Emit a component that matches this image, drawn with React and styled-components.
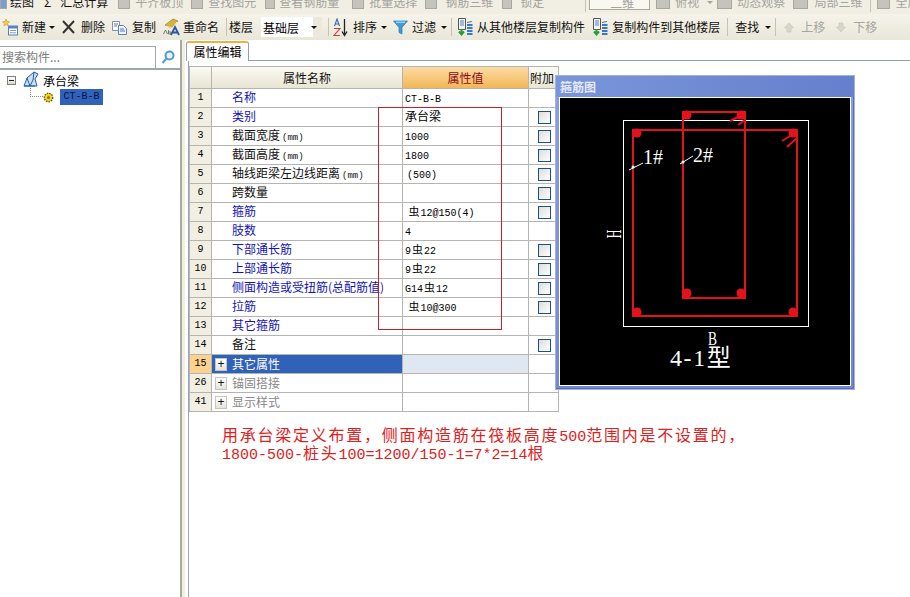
import React from 'react';
import styled, { createGlobalStyle } from 'styled-components';

const GlobalStyle = createGlobalStyle`
  html, body { margin: 0; padding: 0; background: #fff; }
  body { font-family: "Noto Sans CJK SC", "Liberation Sans", sans-serif; font-size: 12px; color: #000; }
`;

const Page = styled.div`
  position: relative;
  width: 910px;
  height: 597px;
  overflow: hidden;
  background: #fff;
`;

const gapLeft = (p) => `margin-left: ${p.$ml || 0}px;`;

const MenuRow = styled.div`
  display: flex;
  align-items: flex-start;
  height: 14px;
  overflow: hidden;
  white-space: nowrap;
  background: #f1efe3;
`;

const MenuText = styled.span`
  ${gapLeft}
  flex: none;
  margin-top: -6px;
  line-height: 16px;
  color: ${(p) => (p.$on ? '#111' : '#a3a3a0')};
`;

const MenuIcon = styled.span`
  ${gapLeft}
  flex: none;
  width: ${(p) => p.$w || 12}px;
  height: 9px;
  background: ${(p) => p.$color || '#c4c4bc'};
  border: 1px solid #a8a8a0;
  box-sizing: border-box;
  border-top: 0;
`;

const MenuSep = styled.span`
  ${gapLeft}
  flex: none;
  width: 1px;
  height: 12px;
  background: #c5c3b3;
`;

const MenuCaret = styled.span`
  ${gapLeft}
  flex: none;
  margin-top: 1px;
  border: 3px solid transparent;
  border-top-color: #a3a3a0;
  border-bottom: 0;
`;

const ViewSelect = styled.span`
  ${gapLeft}
  flex: none;
  width: 61px;
  height: 10px;
  box-sizing: border-box;
  border: 1px solid #aaa99f;
  border-top: 0;
  background: #f8f7f0;
  color: #a3a3a0;
  line-height: 6px;
  padding-left: 20px;
`;

const ToolBar = styled.div`
  display: flex;
  align-items: center;
  height: 26px;
  white-space: nowrap;
  background: linear-gradient(#f6f4ea, #e9e7d8);
`;

const ToolText = styled.span`
  ${gapLeft}
  flex: none;
  line-height: 16px;
  color: ${(p) => (p.$off ? '#a5a5a0' : '#111')};
`;

const ToolSvg = styled.svg`
  ${gapLeft}
  flex: none;
  display: block;
`;

const Caret = styled.span`
  ${gapLeft}
  flex: none;
  width: 0;
  height: 0;
  border: 3px solid transparent;
  border-top-color: #111;
  border-bottom: 0;
`;

const Sep = styled.span`
  ${gapLeft}
  flex: none;
  width: 1px;
  height: 18px;
  background: #c5c3b3;
`;

const FloorSelect = styled.span`
  ${gapLeft}
  flex: none;
  display: flex;
  align-items: center;
  width: 61px;
  height: 20px;
  box-sizing: border-box;
  background: linear-gradient(90deg, #fff 85%, #ece9dc 85%);
  padding-left: 2px;
  justify-content: space-between;
  padding-right: 5px;
`;

const Body = styled.div`
  display: flex;
  height: 557px;
`;

const Side = styled.aside`
  flex: none;
  width: 180px;
  padding-top: 6px;
  box-sizing: border-box;
`;

const Search = styled.div`
  display: flex;
  height: 24px;
`;

const SearchInput = styled.div`
  width: 156px;
  box-sizing: border-box;
  border: 1px solid #9ea6ad;
  border-left: 0;
  border-bottom-width: 2px;
  padding-left: 2px;
  line-height: 20px;
  color: #7c7c7c;
`;

const SearchButton = styled.div`
  flex: 1;
  display: flex;
  align-items: center;
  justify-content: center;
  border-bottom: 2px solid #9ea6ad;
`;

const Tree = styled.div`
  position: relative;
  padding: 2px 0 0 7px;
`;

const TreeRow = styled.div`
  display: flex;
  align-items: center;
  height: ${(p) => p.$h}px;
`;

const Toggle = styled.span`
  flex: none;
  width: 9px;
  height: 9px;
  box-sizing: border-box;
  border: 1px solid #7f7f7f;
  background: linear-gradient(#fff, #d8d8d0);
  display: flex;
  align-items: center;
  justify-content: center;
  &::before {
    content: '';
    width: 5px;
    height: 1px;
    background: #222;
  }
`;

const TreeLabel = styled.span`
  ${gapLeft}
  line-height: 16px;
`;

const Dots = styled.span`
  flex: none;
  width: 13px;
  height: 9px;
  margin-left: 23px;
  margin-top: -9px;
  box-sizing: border-box;
  border-left: 1px dotted #888;
  border-bottom: 1px dotted #888;
`;

const Selected = styled.span`
  margin-left: 6px;
  width: 43px;
  height: 16px;
  background: #2f62b8;
  color: #07124a;
  font-family: "Liberation Mono", monospace;
  font-size: 10px;
  line-height: 16px;
  text-align: center;
`;

const Splitter = styled.div`
  flex: none;
  width: 5px;
  box-sizing: border-box;
  border-left: 2px solid #a9a9a4;
  background: #f0efe2;
`;

const Editor = styled.main`
  flex: 1;
  min-width: 0;
`;

const TabStrip = styled.div`
  height: 20px;
  padding: 1px 0 0 1px;
  box-sizing: border-box;
`;

const Tab = styled.div`
  position: relative;
  z-index: 1;
  width: 63px;
  height: 20px;
  box-sizing: border-box;
  border: 1px solid #8f9db5;
  border-top: 2px solid #f0b040;
  border-bottom: 0;
  border-radius: 3px 3px 0 0;
  background: #fff;
  line-height: 17px;
  text-align: center;
`;

const Panel = styled.div`
  margin-left: 3px;
  height: 537px;
  box-sizing: border-box;
  border-top: 1px solid #8f9db5;
  border-left: 1px solid #9aa3c8;
  padding: 5px 0 0;
`;

const Grid = styled.table`
  table-layout: fixed;
  width: 370px;
  border-spacing: 0;
  border-top: 1px solid #b4b4b0;
  border-left: 1px solid #b4b4b0;
  & td, & th {
    padding: 0;
    border-right: 1px solid #b4b4b0;
    border-bottom: 1px solid #b4b4b0;
    box-sizing: border-box;
    font-weight: normal;
    overflow: hidden;
    white-space: nowrap;
  }
`;

const HeadCell = styled.th`
  height: 22px;
  text-align: ${(p) => (p.$left ? 'left' : 'center')};
  padding-left: ${(p) => (p.$left ? 1 : 0)}px !important;
  line-height: 14px;
  color: ${(p) => (p.$hot ? '#8a0a1c' : '#111')};
  background: ${(p) => (p.$hot
    ? 'linear-gradient(#fbdca6, #f3b655)'
    : 'linear-gradient(#fbfaf3, #e8e5d3)')};
`;

const IndexCell = styled.td`
  height: 19px;
  text-align: center;
  font-family: "Liberation Mono", monospace;
  font-size: 10px;
  line-height: 14px;
  background: ${(p) => (p.$active ? '#fbd28e' : '#f0efe2')};
`;

const NameCell = styled.td`
  padding-left: ${(p) => (p.$group ? 3 : 20)}px !important;
  vertical-align: top;
  line-height: 16px;
  color: ${(p) => p.$color};
  background: ${(p) => (p.$active ? '#2f62b8' : '#fff')};
`;

const GroupName = styled.span`
  display: flex;
  align-items: center;
  height: 18px;
  gap: 5px;
`;

const PlusBox = styled.span`
  flex: none;
  width: 12px;
  height: 13px;
  box-sizing: border-box;
  border: 1px solid #c4c4c0;
  background: linear-gradient(#fff, #e4e4dc);
  color: #111;
  font-family: "Liberation Sans", sans-serif;
  font-size: 12px;
  line-height: 11px;
  text-align: center;
`;

const Unit = styled.span`
  margin-left: 2px;
  font-family: "Liberation Mono", monospace;
  font-size: 9px;
  line-height: 10px;
`;

const ValueCell = styled.td`
  padding-left: 2px !important;
  vertical-align: top;
  line-height: 16px;
  background: ${(p) => (p.$active ? '#dfe7f3' : '#fff')};
`;

const Latin = styled.span`
  font-family: "Liberation Mono", monospace;
  font-size: 10px;
  line-height: 10px;
  margin-left: ${(p) => p.$ml || 0}px;
`;

const Rebar = styled.span`
  font-size: 11px;
  line-height: 10px;
  margin: 0 1px;
`;

const CheckCell = styled.td`
  text-align: center;
  padding-left: 1px !important;
  background: #fff;
`;

const CheckBox = styled.span`
  display: block;
  margin: 0 auto;
  width: 13px;
  height: 13px;
  box-sizing: border-box;
  border: 1px solid #1c5180;
  background: linear-gradient(135deg, #dcdcd7, #fff);
`;

const Note = styled.div`
  margin: 13px 0 0 33px;
  color: #e0201c;
  font-size: 16px;
  letter-spacing: 1.75px;
  white-space: nowrap;
`;

const NoteLine = styled.div`
  height: 18px;
  line-height: 18px;
`;

const NoteLatin = styled.span`
  font-family: "Liberation Mono", monospace;
  font-size: 15px;
  letter-spacing: 0;
`;

// hand drawn red box on top of the value column
const Markup = styled.div`
  position: absolute;
  left: 378px;
  top: 107px;
  width: 124px;
  height: 223px;
  box-sizing: border-box;
  border: 1px solid #c4202c;
  pointer-events: none;
`;

const Dialog = styled.section`
  position: absolute;
  left: 555px;
  top: 75px;
  width: 300px;
  height: 315px;
  box-sizing: border-box;
  padding: 0 3px 4px;
  background: linear-gradient(#8aa0de, #7288d2);
  border: 1px solid #a3b2dc;
  box-shadow: inset 0 -1px 0 #5a70b8, inset -1px 0 0 #5a70b8;
`;

const DialogTitle = styled.h3`
  height: 21px;
  font-size: 12px;
  font-weight: bold;
  line-height: 22px;
  color: #e4e8f4;
  background: linear-gradient(90deg, #7a96da, #6580cc);
  margin: 0 -3px;
  padding-left: 4px;
`;

const DialogBody = styled.div`
  border: 1px solid #fff;
  background: #000;
  height: 287px;
`;

const NewIcon = (p) => (
  <ToolSvg {...p} width="16" height="18" viewBox="0 0 16 18">
    <path d="M4 1l1 2.4 2.4.4-1.8 1.6.5 2.4L4 6.6 1.900 7.800l.5-2.400L.6 3.800 3 3.400z" fill="#f6cf3a" stroke="#b98a16" strokeWidth=".5" />
    <rect x="6.500" y="8" width="9" height="9" fill="#fff" stroke="#5a80b8" />
    <rect x="6.500" y="8" width="9" height="2.500" fill="#5a80c8" />
    <path d="M8 12.500h6M8 14.800h6" stroke="#7c9cc8" />
  </ToolSvg>
);

const DeleteIcon = (p) => (
  <ToolSvg {...p} width="13" height="14" viewBox="0 0 13 14">
    <path d="M1 1l11 12M12 1L1 13" stroke="#333" strokeWidth="2" />
  </ToolSvg>
);

const CopyIcon = (p) => (
  <ToolSvg {...p} width="15" height="15" viewBox="0 0 15 15">
    <path d="M.5 1.500h7v9h-7z" fill="#fff" stroke="#7e90b0" />
    <path d="M6.500 5.500h5l3 3v6h-8z" fill="#eef3fb" stroke="#5f80b4" />
    <path d="M2 4h4M2 6h3M8 9h4M8 11h5" stroke="#4f78c0" />
  </ToolSvg>
);

const RenameIcon = (p) => (
  <ToolSvg {...p} width="17" height="18" viewBox="0 0 17 18">
    <path d="M2 7l8-6 5 2-7 7z" fill="#d8b040" stroke="#8a7020" strokeWidth=".6" />
    <path d="M3 8l6 2 5-6" fill="none" stroke="#f5e6a0" />
    <path d="M.5 16l2-4 2 4" fill="none" stroke="#7a7a60" />
    <path d="M5.500 12v4h2.500v-2h-2.500" fill="none" stroke="#7a7a60" />
    <path d="M8 17l4-8 4 8M9.800 14.500h4.400" fill="none" stroke="#2c55a8" strokeWidth="1.800" />
  </ToolSvg>
);

const SortIcon = (p) => (
  <ToolSvg {...p} width="15" height="19" viewBox="0 0 15 19">
    <path d="M1.500 8l2.500-7 2.500 7M2.500 6h3" fill="none" stroke="#3a6ab8" strokeWidth="1.100" />
    <path d="M1 10.500h6l-6 7h6" fill="none" stroke="#b8443a" strokeWidth="1.100" />
    <path d="M11.500 1v15M9 13.500l2.500 4 2.500-4" fill="none" stroke="#222" strokeWidth="1.300" />
  </ToolSvg>
);

const FilterIcon = (p) => (
  <ToolSvg {...p} width="15" height="15" viewBox="0 0 15 15">
    <path d="M.5 1h14L9 7.500V14l-3-1.500v-5z" fill="#3f9ad8" stroke="#2a78b8" strokeWidth=".7" />
    <path d="M3 2.200h9" stroke="#c8e8f8" />
  </ToolSvg>
);

const FloorCopyIcon = (p) => (
  <ToolSvg {...p} width="16" height="19" viewBox="0 0 16 19">
    <path d="M1.500.5h7v11h-7z" fill="#f4f4ee" stroke="#555" />
    <path d="M3 3h4M3 5h4M3 7h4" stroke="#5080c8" />
    <path d="M4.500 11v4M2 13.500l2.500 3 2.500-3" fill="none" stroke="#2a9a3a" strokeWidth="2" />
    <path d="M10 7h5.500M10 10h5.500M10 13h5.500M10 16h5.500" stroke="#3a78c0" strokeWidth="1.800" />
    <path d="M10 4.500l5-1" stroke="#3a78c0" />
  </ToolSvg>
);

const MoveIcon = ({ $down, ...p }) => (
  <ToolSvg {...p} width="10" height="11" viewBox="0 0 10 11">
    <path
      d={$down ? 'M3 1h4v4h2.500L5 10 .500 5H3z' : 'M3 10h4V6h2.500L5 1 .500 6H3z'}
      fill="#d6d6cc"
      stroke="#c2c2b8"
      strokeWidth=".6"
    />
  </ToolSvg>
);

const SearchIcon = () => (
  <svg width="14" height="15" viewBox="0 0 14 15">
    <circle cx="8.500" cy="5.500" r="4" fill="#e8f3fb" stroke="#4c9ad6" strokeWidth="2" />
    <path d="M5.500 8.500L1.500 13" stroke="#5aa4dc" strokeWidth="2.400" />
  </svg>
);

const BeamIcon = () => (
  <svg width="16" height="16" viewBox="0 0 16 16">
    <path d="M1 15l3-8 7-6 4 2-3 5 2 7z" fill="#cfe0f4" stroke="#1f5fa8" />
    <path d="M1 15h11M4 7l3 8M7 15l3-6M11 1l-1 8" fill="none" stroke="#1f5fa8" />
  </svg>
);

const GearIcon = () => (
  <svg width="11" height="11" viewBox="0 0 11 11">
    <circle cx="5.500" cy="5.500" r="4.200" fill="#f2d820" stroke="#6a5a10" strokeDasharray="1.500 1" strokeWidth="1.400" />
    <circle cx="5.500" cy="5.500" r="1.500" fill="#8a7410" />
  </svg>
);

const rebarRed = '#e5121c';

const RebarDiagram = () => (
  <svg width="290" height="287" viewBox="0 0 290 287" style={{ display: 'block' }}>
    <rect x="63.500" y="22.500" width="185" height="206" fill="none" stroke="#fff" />
    <rect x="73" y="32" width="164" height="186" fill="none" stroke={rebarRed} strokeWidth="2" />
    <rect x="123" y="14" width="62" height="186" fill="none" stroke={rebarRed} strokeWidth="2" />
    {[[77, 35], [233, 35], [77, 214], [233, 214], [127, 17], [181, 17], [127, 195], [181, 195]].map(([cx, cy]) => (
      <circle key={`${cx}-${cy}`} cx={cx} cy={cy} r="4.500" fill={rebarRed} />
    ))}
    <path d="M222 43l13-8M227 49l10-9M170 23l12-6M178 27l7-5" stroke={rebarRed} strokeWidth="2" fill="none" />
    <path d="M69 72l14-7M120 66l13-8" stroke="#fff" fill="none" />
    <circle cx="73" cy="69" r="1.500" fill="#fff" />
    <circle cx="123" cy="64" r="1.500" fill="#fff" />
    <text x="83" y="66" fill="#fff" fontFamily="Liberation Serif, serif" fontSize="20">1#</text>
    <text x="133" y="64" fill="#fff" fontFamily="Liberation Serif, serif" fontSize="20">2#</text>
    <text transform="translate(61 136) rotate(-90) scale(.75 1.300)" textAnchor="middle" fill="#fff" fontFamily="Liberation Serif, serif" fontSize="16">H</text>
    <text transform="translate(148 247) scale(.75 1.100)" fill="#fff" fontFamily="Liberation Serif, serif" fontSize="18">B</text>
    <text x="110" y="268" fill="#fff" fontFamily="Liberation Serif, Noto Sans CJK SC, serif" fontSize="24">
      <tspan letterSpacing="1.600">4-1</tspan>
      <tspan fontSize="24">型</tspan>
    </text>
  </svg>
);

const rows = [
  { n: 1, name: '名称', blue: true, value: <Latin>CT-B-B</Latin> },
  { n: 2, name: '类别', blue: true, value: '承台梁', check: true },
  { n: 3, name: '截面宽度', unit: true, value: <Latin>1000</Latin>, check: true },
  { n: 4, name: '截面高度', unit: true, value: <Latin>1800</Latin>, check: true },
  { n: 5, name: '轴线距梁左边线距离', unit: true, value: <Latin $ml={2}>(500)</Latin>, check: true },
  { n: 6, name: '跨数量', check: true },
  { n: 7, name: '箍筋', blue: true, value: <><Rebar>&nbsp;虫</Rebar><Latin>12@150(4)</Latin></>, check: true },
  { n: 8, name: '肢数', blue: true, value: <Latin>4</Latin> },
  { n: 9, name: '下部通长筋', blue: true, value: <><Latin>9</Latin><Rebar>虫</Rebar><Latin>22</Latin></>, check: true },
  { n: 10, name: '上部通长筋', blue: true, value: <><Latin>9</Latin><Rebar>虫</Rebar><Latin>22</Latin></>, check: true },
  { n: 11, name: '侧面构造或受扭筋(总配筋值)', blue: true, value: <><Latin>G14</Latin><Rebar>虫</Rebar><Latin>12</Latin></>, check: true },
  { n: 12, name: '拉筋', blue: true, value: <><Rebar>&nbsp;虫</Rebar><Latin>10@300</Latin></>, check: true },
  { n: 13, name: '其它箍筋', blue: true },
  { n: 14, name: '备注', check: true },
  { n: 15, name: '其它属性', group: true, active: true },
  { n: 26, name: '锚固搭接', group: true },
  { n: 41, name: '显示样式', group: true },
];

const nameColor = (r) => {
  if (r.active) return '#fff';
  if (r.group) return '#888';
  return r.blue ? '#1414b4' : '#111';
};

function App() {
  return (
    <Page>
      <GlobalStyle />
      <MenuRow>
        <MenuIcon $w={7} $color="#7a9ccf" />
        <MenuText $ml={3} $on>绘图</MenuText>
        <MenuText $ml={10} $on>Σ</MenuText>
        <MenuText $ml={9} $on>汇总计算</MenuText>
        <MenuIcon $ml={10} />
        <MenuText $ml={5}>平齐板顶</MenuText>
        <MenuIcon $ml={8} />
        <MenuText $ml={5}>查找图元</MenuText>
        <MenuIcon $ml={9} $w={10} />
        <MenuText $ml={4}>查看钢筋量</MenuText>
        <MenuIcon $ml={13} />
        <MenuText $ml={5}>批量选择</MenuText>
        <MenuIcon $ml={8} />
        <MenuText $ml={8}>钢筋三维</MenuText>
        <MenuIcon $ml={9} $w={10} />
        <MenuText $ml={8}>锁定</MenuText>
        <MenuSep $ml={41} />
        <ViewSelect $ml={3}>二维</ViewSelect>
        <MenuIcon $ml={6} $w={14} />
        <MenuText $ml={5}>俯视</MenuText>
        <MenuCaret $ml={8} />
        <MenuIcon $ml={4} $w={15} />
        <MenuText $ml={5}>动态观察</MenuText>
        <MenuIcon $ml={8} $w={15} />
        <MenuText $ml={6}>局部三维</MenuText>
        <MenuSep $ml={8} />
        <MenuIcon $ml={6} $w={13} />
        <MenuText $ml={5}>全屏</MenuText>
      </MenuRow>
      <ToolBar>
        <NewIcon $ml={2} />
        <ToolText $ml={4}>新建</ToolText>
        <Caret $ml={3} />
        <DeleteIcon $ml={7} />
        <ToolText $ml={6}>删除</ToolText>
        <CopyIcon $ml={7} />
        <ToolText $ml={5}>复制</ToolText>
        <RenameIcon $ml={7} />
        <ToolText $ml={3}>重命名</ToolText>
        <Sep $ml={7} />
        <ToolText $ml={2}>楼层</ToolText>
        <FloorSelect $ml={8}>基础层<Caret /></FloorSelect>
        <Sep $ml={6} />
        <SortIcon $ml={4} />
        <ToolText $ml={5}>排序</ToolText>
        <Caret $ml={4} />
        <FilterIcon $ml={6} />
        <ToolText $ml={4}>过滤</ToolText>
        <Caret $ml={5} />
        <Sep $ml={4} />
        <FloorCopyIcon $ml={5} />
        <ToolText $ml={4}>从其他楼层复制构件</ToolText>
        <FloorCopyIcon $ml={7} />
        <ToolText $ml={4}>复制构件到其他楼层</ToolText>
        <Sep $ml={7} />
        <ToolText $ml={7}>查找</ToolText>
        <Caret $ml={6} />
        <Sep $ml={4} />
        <MoveIcon $ml={8} />
        <ToolText $ml={7} $off>上移</ToolText>
        <MoveIcon $ml={11} $down />
        <ToolText $ml={7} $off>下移</ToolText>
      </ToolBar>
      <Body>
        <Side>
          <Search>
            <SearchInput>搜索构件...</SearchInput>
            <SearchButton><SearchIcon /></SearchButton>
          </Search>
          <Tree>
            <TreeRow $h={17}>
              <Toggle />
              <TreeLabel $ml={7}><BeamIcon /></TreeLabel>
              <TreeLabel $ml={4}>承台梁</TreeLabel>
            </TreeRow>
            <TreeRow $h={16}>
              <Dots />
              <GearIcon />
              <Selected>CT-B-B</Selected>
            </TreeRow>
          </Tree>
        </Side>
        <Splitter />
        <Editor>
          <TabStrip><Tab>属性编辑</Tab></TabStrip>
          <Panel>
            <Grid>
              <colgroup>
                <col width="22" />
                <col width="191" />
                <col width="126" />
                <col width="30" />
              </colgroup>
              <thead>
                <tr>
                  <HeadCell />
                  <HeadCell>属性名称</HeadCell>
                  <HeadCell $hot>属性值</HeadCell>
                  <HeadCell $left>附加</HeadCell>
                </tr>
              </thead>
              <tbody>
                {rows.map((r) => (
                  <tr key={r.n}>
                    <IndexCell $active={r.active}>{r.n}</IndexCell>
                    <NameCell $group={r.group} $active={r.active} $color={nameColor(r)}>
                      {r.group ? (
                        <GroupName><PlusBox>+</PlusBox>{r.name}</GroupName>
                      ) : (
                        <>{r.name}{r.unit && <Unit>(mm)</Unit>}</>
                      )}
                    </NameCell>
                    <ValueCell $active={r.active}>{r.value}</ValueCell>
                    <CheckCell>{r.check && <CheckBox />}</CheckCell>
                  </tr>
                ))}
              </tbody>
            </Grid>
            <Note>
              <NoteLine>用承台梁定义布置，侧面构造筋在筏板高度<NoteLatin>500</NoteLatin>范围内是不设置的，</NoteLine>
              <NoteLine><NoteLatin>1800-500-</NoteLatin>桩头<NoteLatin>100=1200/150-1=7*2=14</NoteLatin>根</NoteLine>
            </Note>
          </Panel>
        </Editor>
      </Body>
      <Markup />
      <Dialog>
        <DialogTitle>箍筋图</DialogTitle>
        <DialogBody><RebarDiagram /></DialogBody>
      </Dialog>
    </Page>
  );
}

export default App;
